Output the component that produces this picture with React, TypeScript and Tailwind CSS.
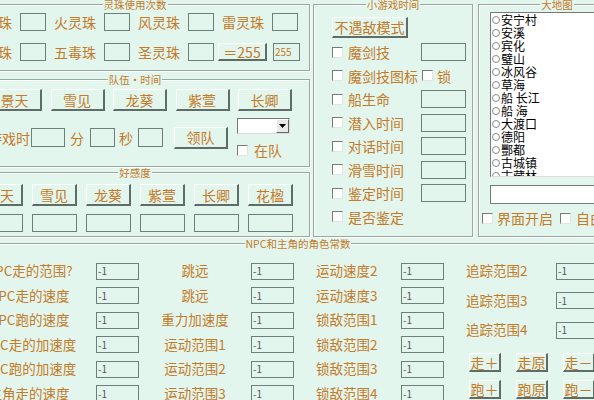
import React from "react";

type P = { className?: string; children?: React.ReactNode };

function TB({ className = "", children }: P) {
  return (
    <div className={`shrink-0 border border-[#6c807a] flex items-center pl-[1px] text-[10px] leading-none text-[#555] ${className}`}>
      {children}
    </div>
  );
}

function Btn({ className = "", children }: P) {
  return (
    <div className={`shrink-0 flex items-center justify-center border border-t-white border-l-white border-r-2 border-b-2 border-r-[#5e6d68] border-b-[#5e6d68] whitespace-nowrap ${className}`}>
      {children}
    </div>
  );
}

function Chk({ className = "" }: { className?: string }) {
  return <span className={`block shrink-0 w-[11px] h-[11px] bg-white border border-[#7a7a7a] border-r-[#e4e4e4] border-b-[#e4e4e4] ${className}`} />;
}

function Group({ title, className = "", children }: P & { title: string }) {
  return (
    <fieldset className={`shrink-0 border border-[#98a9a3] shadow-[inset_1px_1px_0_#fff,1px_1px_0_#fff] ${className}`}>
      <legend className="mx-auto px-[1px] text-[10.5px] leading-[9px] bg-[#e3f6ee] whitespace-nowrap">{title}</legend>
      {children}
    </fieldset>
  );
}

const places = ["安宁村", "安溪", "宾化", "璧山", "冰风谷", "草海", "船 长江", "船 海", "大渡口", "德阳", "酆都", "古城镇", "古藏林"];

const miniRows = [
  { label: "魔剑技", box: true },
  { label: "魔剑技图标", lock: true },
  { label: "船生命", box: true },
  { label: "潜入时间", box: true },
  { label: "对话时间", box: true },
  { label: "滑雪时间", box: true },
  { label: "鉴定时间", box: true },
  { label: "是否鉴定" },
];

const npcRows = [
  ["NPC走的范围?", "跳远", "运动速度2"],
  ["NPC走的速度", "跳远", "运动速度3"],
  ["NPC跑的速度", "重力加速度", "锁敌范围1"],
  ["NPC走的加速度", "运动范围1", "锁敌范围2"],
  ["NPC跑的加速度", "运动范围2", "锁敌范围3"],
  ["主角走的速度", "运动范围3", "锁敌范围4"],
];

export default function App() {
  return (
    <div className="w-[594px] h-[400px] overflow-hidden bg-[#e3f6ee] text-[#c47a28] text-[14px] leading-none font-['Noto_Sans_CJK_SC','Noto_Sans',sans-serif]">
      <div className="flex h-[237px]">
        {/* left column */}
        <div className="-ml-[40px] w-[350px] shrink-0 flex flex-col">
          <Group title="灵珠使用次数" className="h-[71px]">
            <div className="pl-[9px] mt-[4px] flex items-center gap-[8px] h-[18px]">
              <span className="w-[42px] shrink-0">水灵珠</span>
              <TB className="w-[26px] h-[18px]" />
              <span className="w-[42px] shrink-0">火灵珠</span>
              <TB className="w-[26px] h-[18px]" />
              <span className="w-[42px] shrink-0">风灵珠</span>
              <TB className="w-[26px] h-[18px]" />
              <span className="w-[42px] shrink-0">雷灵珠</span>
              <TB className="w-[26px] h-[18px]" />
            </div>
            <div className="pl-[9px] mt-[12px] flex items-center h-[18px]">
              <span className="w-[42px] shrink-0">土灵珠</span>
              <TB className="ml-[8px] w-[26px] h-[18px]" />
              <span className="ml-[8px] w-[42px] shrink-0">五毒珠</span>
              <TB className="ml-[8px] w-[26px] h-[18px]" />
              <span className="ml-[8px] w-[42px] shrink-0">圣灵珠</span>
              <TB className="ml-[8px] w-[26px] h-[18px]" />
              <Btn className="ml-[4px] w-[49px] h-[18px]">＝255</Btn>
              <TB className="ml-[6px] w-[27px] h-[18px] text-[#c47a28] text-[9px]">255</TB>
            </div>
          </Group>

          <Group title="队伍•时间" className="mt-[4px] h-[92px]">
            <div className="pl-[27px] mt-[5px] flex gap-[8.5px]">
              {["景天", "雪见", "龙葵", "紫萱", "长卿"].map((n) => (
                <Btn key={n} className="w-[54px] h-[22px]">{n}</Btn>
              ))}
            </div>
            <div className="pl-[27px] mt-[7px] h-[39px] flex items-center">
              <span className="w-[42px] shrink-0">游戏时</span>
              <TB className="ml-[1px] w-[34px] h-[19px]" />
              <span className="ml-[5px]">分</span>
              <TB className="ml-[6px] w-[25px] h-[19px]" />
              <span className="ml-[4px]">秒</span>
              <TB className="ml-[5px] w-[25px] h-[19px]" />
              <Btn className="ml-[11px] w-[54px] h-[22px]">领队</Btn>
              <div className="ml-[9px] self-start flex flex-col">
                <div className="w-[53px] h-[16px] bg-white border border-[#777] border-r-[#ddd] border-b-[#ddd] flex justify-end">
                  <div className="w-[13px] h-full bg-[#e8e8e8] border border-t-white border-l-white border-r-[#666] border-b-[#666] flex items-center justify-center">
                    <svg width="7" height="4" viewBox="0 0 7 4"><path d="M0 0h7L3.5 4z" fill="#000" /></svg>
                  </div>
                </div>
                <div className="mt-[9px] flex items-center h-[14px]">
                  <Chk />
                  <span className="ml-[6px]">在队</span>
                </div>
              </div>
            </div>
          </Group>

          <Group title="好感度" className="mt-[1px] h-[69px]">
            <div className="pl-[17px] mt-[7px] flex gap-[9px]">
              {["景天", "雪见", "龙葵", "紫萱", "长卿", "花楹"].map((n) => (
                <Btn key={n} className="w-[45px] h-[22px]">{n}</Btn>
              ))}
            </div>
            <div className="pl-[17px] mt-[8px] flex gap-[9px]">
              {[0, 1, 2, 3, 4, 5].map((i) => (
                <TB key={i} className="w-[45px] h-[18px]" />
              ))}
            </div>
          </Group>
        </div>

        {/* mini game */}
        <Group title="小游戏时间" className="ml-[3px] w-[160px] h-[237px]">
          <Btn className="ml-[18px] mt-[8px] w-[76px] h-[21px]">不遇敌模式</Btn>
          <div className="mt-[2.25px] pl-[18px] pr-[6px]">
            {miniRows.map((r) => (
              <div key={r.label} className="h-[23.5px] flex items-center">
                <Chk />
                <span className="ml-[5px] whitespace-nowrap">{r.label}</span>
                {r.lock && (
                  <>
                    <Chk className="ml-[4px]" />
                    <span className="ml-[4px]">锁</span>
                  </>
                )}
                {r.box && <TB className="ml-auto w-[45px] h-[18px]" />}
              </div>
            ))}
          </div>
        </Group>

        {/* world map */}
        <Group title="大地图" className="ml-[5px] w-[158px] h-[237px]">
          <div className="ml-[11px] mt-[3px] w-[140px] h-[165px] bg-white border border-[#777] border-r-[#ddd] border-b-[#ddd] overflow-hidden text-black text-[12px]">
            {places.map((p) => (
              <div key={p} className="h-[13px] leading-[13px] flex items-center whitespace-nowrap overflow-visible">
                <span className="block w-[8px] h-[8px] rounded-full border border-[#888] mx-[1px] shrink-0" />
                {p}
              </div>
            ))}
          </div>
          <TB className="ml-[11px] mt-[8px] w-[140px] h-[19px] bg-white" />
          <div className="ml-[3px] mt-[7px] h-[14px] flex items-center whitespace-nowrap">
            <Chk />
            <span className="ml-[4px]">界面开启</span>
            <Chk className="ml-[7px]" />
            <span className="ml-[5px]">自由</span>
          </div>
        </Group>
      </div>

      {/* NPC constants */}
      <Group title="NPC和主角的角色常数" className="-ml-[40px] mt-[1.5px] w-[676px] h-[200px]">
        <div className="mt-[11.25px] flex text-[13.5px]">
          <div className="flex flex-col">
            {npcRows.map((r, i) => (
              <div key={i} className="h-[24.5px] flex items-center whitespace-nowrap">
                <span className="ml-[19px] w-[98px] text-center">{r[0]}</span>
                <TB className="ml-[18px] w-[43px] h-[17px]">-1</TB>
                <span className="w-[112px] text-center">{r[1]}</span>
                <TB className="w-[43px] h-[17px]">-1</TB>
                <span className="w-[107px] pl-[22px]">{r[2]}</span>
                <TB className="w-[43px] h-[17px]">-1</TB>
              </div>
            ))}
          </div>
          <div className="-mt-[2.5px] flex flex-col">
            {["追踪范围2", "追踪范围3", "追踪范围4"].map((l) => (
              <div key={l} className="h-[29.5px] flex items-center whitespace-nowrap">
                <span className="w-[112px] pl-[22px]">{l}</span>
                <TB className="w-[43px] h-[17px]">-1</TB>
              </div>
            ))}
            <div className="mt-[8.25px] ml-[25px] flex gap-[15px] text-[14px]">
              <Btn className="w-[32px] h-[19px]">走＋</Btn>
              <Btn className="w-[32px] h-[19px]">走原</Btn>
              <Btn className="w-[32px] h-[19px]">走－</Btn>
            </div>
            <div className="mt-[8px] ml-[25px] flex gap-[15px] text-[14px]">
              <Btn className="w-[32px] h-[19px]">跑＋</Btn>
              <Btn className="w-[32px] h-[19px]">跑原</Btn>
              <Btn className="w-[32px] h-[19px]">跑－</Btn>
            </div>
          </div>
        </div>
      </Group>
    </div>
  );
}
